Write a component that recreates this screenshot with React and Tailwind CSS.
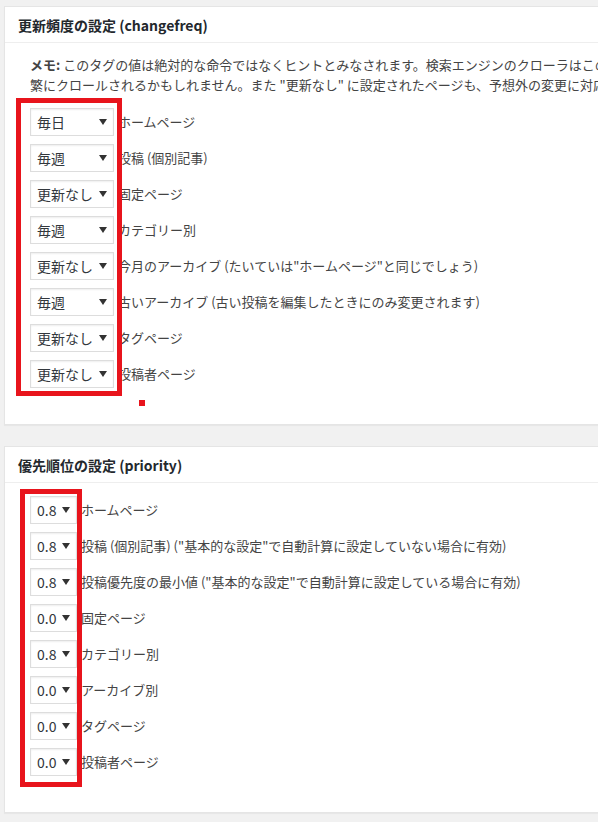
const freqRows = [
  { value: '毎日', label: 'ホームページ' },
  { value: '毎週', label: '投稿 (個別記事)' },
  { value: '更新なし', label: '固定ページ' },
  { value: '毎週', label: 'カテゴリー別' },
  { value: '更新なし', label: '今月のアーカイブ (たいていは"ホームページ"と同じでしょう)' },
  { value: '毎週', label: '古いアーカイブ (古い投稿を編集したときにのみ変更されます)' },
  { value: '更新なし', label: 'タグページ' },
  { value: '更新なし', label: '投稿者ページ' },
];

const prioRows = [
  { value: '0.8', label: 'ホームページ' },
  { value: '0.8', label: '投稿 (個別記事) ("基本的な設定"で自動計算に設定していない場合に有効)' },
  { value: '0.8', label: '投稿優先度の最小値 ("基本的な設定"で自動計算に設定している場合に有効)' },
  { value: '0.0', label: '固定ページ' },
  { value: '0.8', label: 'カテゴリー別' },
  { value: '0.0', label: 'アーカイブ別' },
  { value: '0.0', label: 'タグページ' },
  { value: '0.0', label: '投稿者ページ' },
];

function Arrow() {
  return (
    <svg width="8" height="6" viewBox="0 0 8 6" aria-hidden="true">
      <polygon points="0,0 8,0 4,6" fill="#333" />
    </svg>
  );
}

function Select({ value, width }) {
  return (
    <div className={`${width} h-[28px] flex items-center justify-between pl-[6px] pr-[6px] bg-white border border-[#dddddd] shadow-[inset_0_1px_2px_rgba(0,0,0,0.07)] text-[14px] text-[#32373c] shrink-0`}>
      <span>{value}</span>
      <Arrow />
    </div>
  );
}

function Row({ value, label, width }) {
  return (
    <div className="flex items-center h-[28px] gap-[4px]">
      <Select value={value} width={width} />
      <span className="text-[13px] text-[#444] whitespace-nowrap">{label}</span>
    </div>
  );
}

function Card({ title, children, className }) {
  return (
    <div className={`w-[660px] bg-white border border-[#e5e5e5] shadow-[0_1px_1px_rgba(0,0,0,0.04)] ${className}`}>
      <div className="h-[36px] flex items-center px-[13px] border-b border-[#eeeeee]">
        <h2 className="text-[14px] font-semibold text-[#23282d]">{title}</h2>
      </div>
      {children}
    </div>
  );
}

export default function App() {
  return (
    <div className="relative w-[598px] h-[822px] overflow-hidden bg-[#f1f1f1] pt-[6px] pl-[4px] leading-[20px]" style={{ fontFamily: '"Noto Sans CJK JP", "Noto Sans", sans-serif' }}>
      <Card title="更新頻度の設定 (changefreq)">
        <div className="pl-[25px] pt-[12px] pb-[36px]">
          <div className="text-[13px] text-[#444] whitespace-nowrap">
            <div><strong className="font-semibold">メモ:</strong> このタグの値は絶対的な命令ではなくヒントとみなされます。検索エンジンのクローラはこの設定を考慮に入れますが、</div>
            <div>繁にクロールされるかもしれません。また "更新なし" に設定されたページも、予想外の変更に対応するため、定期的にクロールが行われるでしょう。</div>
          </div>
          <div className="mt-[13px] flex flex-col gap-[8px]">
            {freqRows.map((r, i) => (
              <Row key={i} value={r.value} label={r.label} width="w-[84px]" />
            ))}
          </div>
        </div>
      </Card>

      <Card title="優先順位の設定 (priority)" className="mt-[21px]">
        <div className="pl-[25px] pt-[13px] pb-[36px] flex flex-col gap-[8px]">
          {prioRows.map((r, i) => (
            <Row key={i} value={r.value} label={r.label} width="w-[47px]" />
          ))}
        </div>
      </Card>

      {/* red annotation marks drawn over the screenshot */}
      <div className="absolute left-[16px] top-[98px] w-[106px] h-[298px] border-[5px] border-[#e8141c]" />
      <div className="absolute left-[139px] top-[400px] w-[6px] h-[6px] bg-[#e8141c]" />
      <div className="absolute left-[20px] top-[489px] w-[62px] h-[298px] border-[5px] border-[#e8141c]" />
    </div>
  );
}
